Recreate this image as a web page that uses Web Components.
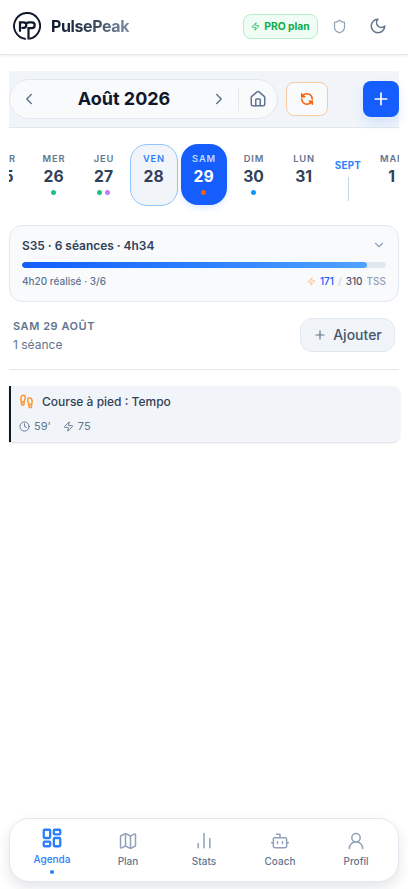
<!DOCTYPE html>
<html lang="fr">
<head>
<meta charset="utf-8">
<title>PulsePeak</title>
<style>
html,body{margin:0;height:100%;background:#fff}
body{font-family:Inter,"Liberation Sans",sans-serif;color:#314158;overflow:hidden}
</style>
</head>
<body>
<pulse-app></pulse-app>
<script>
const ICONS = {
  zap:'<path d="M4 14a1 1 0 0 1-.78-1.63l9.9-10.2a.5.5 0 0 1 .86.46l-1.92 6.02A1 1 0 0 0 13 10h7a1 1 0 0 1 .78 1.63l-9.9 10.2a.5.5 0 0 1-.86-.46l1.92-6.02A1 1 0 0 0 11 14z"/>',
  shield:'<path d="M20 13c0 5-3.5 7.5-7.66 8.95a1 1 0 0 1-.67-.01C7.5 20.5 4 18 4 13V6a1 1 0 0 1 1-1c2 0 4.500-1.200 6.240-2.720a1.170 1.170 0 0 1 1.520 0C14.510 3.810 17 5 19 5a1 1 0 0 1 1 1z"/>',
  moon:'<path d="M12 3a6 6 0 0 0 9 9 9 9 0 1 1-9-9Z"/>',
  left:'<path d="m15 18-6-6 6-6"/>',
  right:'<path d="m9 18 6-6-6-6"/>',
  down:'<path d="m6 9 6 6 6-6"/>',
  plus:'<path d="M5 12h14M12 5v14"/>',
  home:'<path d="M15 21v-8a1 1 0 0 0-1-1h-4a1 1 0 0 0-1 1v8"/><path d="M3 10a2 2 0 0 1 .709-1.528l7-5.999a2 2 0 0 1 2.582 0l7 5.999A2 2 0 0 1 21 10v9a2 2 0 0 1-2 2H5a2 2 0 0 1-2-2z"/>',
  sync:'<path d="M21 12a9 9 0 0 0-9-9 9.750 9.750 0 0 0-6.740 2.740L3 8"/><path d="M3 3v5h5"/><path d="M3 12a9 9 0 0 0 9 9 9.750 9.750 0 0 0 6.740-2.740L21 16"/><path d="M16 16h5v5"/>',
  clock:'<circle cx="12" cy="12" r="10"/><path d="M12 6v6l4 2"/>',
  steps:'<path d="M4 16v-2.380C4 11.500 2.970 10.500 3 8c.03-2.720 1.490-6 4.500-6C9.370 2 10 3.800 10 5.500c0 3.110-2 5.660-2 8.680V16a2 2 0 1 1-4 0Z"/><path d="M20 20v-2.380c0-2.120 1.030-3.120 1-5.620-.03-2.720-1.490-6-4.500-6C14.630 6 14 7.800 14 9.500c0 3.110 2 5.660 2 8.680V20a2 2 0 1 0 4 0Z"/><path d="M16 17h4M4 13h4"/>',
  grid:'<rect width="7" height="9" x="3" y="3" rx="1"/><rect width="7" height="5" x="14" y="3" rx="1"/><rect width="7" height="9" x="14" y="12" rx="1"/><rect width="7" height="5" x="3" y="16" rx="1"/>',
  map:'<path d="M14.106 5.553a2 2 0 0 0 1.788 0l3.659-1.830A1 1 0 0 1 21 4.619v12.764a1 1 0 0 1-.553.894l-4.553 2.277a2 2 0 0 1-1.788 0l-4.212-2.106a2 2 0 0 0-1.788 0l-3.659 1.830A1 1 0 0 1 3 19.381V6.618a1 1 0 0 1 .553-.894l4.553-2.277a2 2 0 0 1 1.788 0z"/><path d="M15 5.764v15M9 3.236v15"/>',
  stats:'<path d="M12 20V3M19 20V9M5 20v-5"/>',
  bot:'<path d="M12 8V4H8"/><rect width="16" height="12" x="4" y="8" rx="2"/><path d="M2 14h2M20 14h2M15 13v2M9 13v2"/>',
  user:'<circle cx="12" cy="8" r="5"/><path d="M20 21a8 8 0 0 0-16 0"/>'
};

class Base extends HTMLElement {
  constructor(){ super(); this.attachShadow({mode:'open'}); }
  connectedCallback(){ this.shadowRoot.innerHTML = '<style>*{box-sizing:border-box}:host{box-sizing:border-box}' + this.css() + '</style>' + this.html(); }
  at(n, d=''){ return this.getAttribute(n) ?? d; }
}

customElements.define('pp-icon', class extends Base {
  css(){ const s=this.at('size','16'); return `:host{display:block;flex:none;width:${s}px;height:${s}px}svg{display:block;width:100%;height:100%}`; }
  html(){ return `<svg viewBox="0 0 24 24" fill="none" stroke="currentColor" stroke-width="${this.at('weight','2')}" stroke-linecap="round" stroke-linejoin="round">${ICONS[this.at('name')]}</svg>`; }
});

customElements.define('pp-logo', class extends Base {
  css(){ return ':host{display:block;width:28px;height:28px}svg{display:block}'; }
  html(){ return `<svg width="28" height="28" viewBox="0 0 28 28" fill="none" stroke="#0f172b"><path d="M12.800 26.950A13 13 0 1 1 16.400 26.800" stroke-width="1.900"/><path d="M7 19.700V10.300h3.500a2.800 2.800 0 0 1 0 5.600H8.500" stroke-width="2.200"/><path d="M13 11.400c1-.8 2-1.100 3.500-1.100h2.300a2.900 2.900 0 0 1 0 5.800H15.500v11.400" stroke-width="2.200"/></svg>`; }
});

customElements.define('pp-header', class extends Base {
  css(){ return `:host{display:flex;align-items:center;height:55px;padding:0 21px 2px 13px;border-bottom:1px solid #e2e8f0;box-shadow:0 1px 3px #0f172b12;flex:none}
  .name{font-size:16px;font-weight:700;letter-spacing:-.4px;line-height:24px;margin-left:10px;background:linear-gradient(90deg,#0f172b 0%,#314158 50%,#7c8ca3 100%);-webkit-background-clip:text;background-clip:text;color:transparent}
  .pro{margin-left:auto;display:flex;align-items:center;justify-content:center;gap:4px;width:75px;height:25px;border:1px solid #b0efc7;border-radius:8px;background:#f0fdf4;color:#0fac4b;font-size:10.300px;font-weight:700;white-space:nowrap}
  .shield{color:#90a1b9;margin-left:14px}.moon{color:#62748e;margin-left:22px}`; }
  html(){ return `<pp-logo></pp-logo><span class="name">PulsePeak</span><div class="pro"><pp-icon name="zap" size="9"></pp-icon><span>PRO plan</span></div><pp-icon class="shield" name="shield" size="15"></pp-icon><pp-icon class="moon" name="moon" size="18"></pp-icon>`; }
});

customElements.define('pp-toolbar', class extends Base {
  css(){ return `:host{display:flex;align-items:center;height:57px;background:#f1f5f9;border-bottom:1px solid #e2e8f0}
  .month{display:flex;align-items:center;width:269px;height:40px;border:1px solid #e2e8f0;border-radius:20px;background:#f8fafc;color:#62748e;padding:0 10px}
  .month b{flex:1;text-align:center;color:#0f172b;font-size:18px;font-weight:700;line-height:24px}
  .sep{width:1px;height:24px;background:#e2e8f0;margin:0 10px}
  .sync{display:flex;align-items:center;justify-content:center;width:42px;height:34px;margin-left:8px;border:1px solid #f9cba2;border-radius:8px;background:#f8fafc;color:#f5600b}
  .add{display:flex;align-items:center;justify-content:center;width:36px;height:36px;margin-left:auto;border-radius:8px;background:#155dfc;color:#fff;box-shadow:0 6px 12px #2b7fff26}`; }
  html(){ return `<div class="month"><pp-icon name="left" size="18"></pp-icon><b>Août 2026</b><pp-icon name="right" size="18"></pp-icon><i class="sep"></i><pp-icon name="home" size="18"></pp-icon></div><div class="sync"><pp-icon name="sync" size="14" weight="2.8"></pp-icon></div><div class="add"><pp-icon name="plus" size="20"></pp-icon></div>`; }
});

customElements.define('pp-day', class extends Base {
  css(){ return `:host{display:flex;flex-direction:column;align-items:center;flex:none;width:48px;height:62px;padding-top:8px;border:1px solid transparent;border-radius:17px}
  .d{font-size:9.300px;font-weight:600;letter-spacing:.85px;line-height:12px;color:#62748e}
  .n{font-size:15.700px;font-weight:700;line-height:20px;margin-top:2px;margin-right:.8px;color:#314158}
  .dots{display:flex;gap:3px;margin:3px 1px 0 0}.dots i{width:5px;height:5px;border-radius:50%}
  :host([kind=today]){background:#f1f5f9;border-color:#8ec5ff}:host([kind=today]) .d{color:#2b7fff}
  :host([kind=active]){width:46px;height:61px;margin:0 1px;background:#155dfc;box-shadow:0 3px 6px #2b7fff26}:host([kind=active]) .d{color:#bedbff}:host([kind=active]) .n{color:#fff}`; }
  html(){ return `<span class="d">${this.at('label')}</span><span class="n">${this.at('num')}</span><div class="dots">${this.at('dots').split(' ').filter(Boolean).map(c=>`<i style="background:${c}"></i>`).join('')}</div>`; }
});

customElements.define('pp-month-mark', class extends Base {
  css(){ return `:host{display:flex;flex-direction:column;align-items:center;flex:none;width:36px;height:62px;padding-top:15px}
  span{font-size:9.800px;font-weight:700;letter-spacing:.25px;line-height:13px;color:#2b7fff}i{width:1px;height:24px;margin-top:5px;background:#cad5e2}`; }
  html(){ return `<span>${this.at('label')}</span><i></i>`; }
});

customElements.define('pp-days', class extends Base {
  css(){ return `:host{display:block;height:70px;margin-top:16px;overflow:hidden}
  .row{display:flex;gap:2px;margin-left:-29px}`; }
  html(){ return `<div class="row"><pp-day label="MAR" num="25"></pp-day><pp-day label="MER" num="26" dots="#1fc282"></pp-day><pp-day label="JEU" num="27" dots="#1fc282 #c27aff"></pp-day><pp-day label="VEN" num="28" kind="today"></pp-day><pp-day label="SAM" num="29" kind="active" dots="#ff5a0a"></pp-day><pp-day label="DIM" num="30" dots="#0c98ff"></pp-day><pp-day label="LUN" num="31"></pp-day><pp-month-mark label="SEPT"></pp-month-mark><pp-day label="MAR" num="1"></pp-day></div>`; }
});

customElements.define('pp-week', class extends Base {
  css(){ return `:host{display:flex;flex-direction:column;height:77px;margin-top:11px;padding:11px 12px 0;border:1px solid #e2e8f0;border-radius:13px;background:#f8fafc}
  .top,.bottom{display:flex;align-items:center;justify-content:space-between}
  .top{height:16px;font-size:11.950px;font-weight:600;color:#314158}
  .top pp-icon{color:#90a1b9}
  .bar{height:6px;margin-top:9px;border-radius:3px;background:#e2e8f0;overflow:hidden}.bar i{display:block;width:345px;height:6px;border-radius:3px;background:linear-gradient(90deg,#155dfc,#2b7fff 50%,#51a2ff)}
  .bottom{height:14px;margin-top:6px;font-size:10px;font-weight:500;color:#62748e}
  .tss{display:flex;align-items:center;gap:4px;color:#90a1b9}.tss pp-icon{color:#f8b566}.tss b{font-weight:500;color:#155dfc}.tss em{font-style:normal;color:#cad5e2}.tss u{text-decoration:none;color:#45556c}`; }
  html(){ return `<div class="top"><span>S35 · 6 séances · 4h34</span><pp-icon name="down" size="14"></pp-icon></div><div class="bar"><i></i></div><div class="bottom"><span>4h20 réalisé · 3/6</span><div class="tss"><pp-icon name="zap" size="9"></pp-icon><b>171</b><em>/</em><u>310</u><span>TSS</span></div></div>`; }
});

customElements.define('pp-day-head', class extends Base {
  css(){ return `:host{display:flex;justify-content:space-between;height:68px;padding:16px 4px 0;border-bottom:1px solid #e2e8f0}
  .t{font-size:11px;font-weight:600;letter-spacing:.55px;line-height:16px;color:#62748e}.s{font-size:12px;line-height:18px;margin-top:2px;color:#62748e}
  button{all:unset;box-sizing:border-box;display:flex;align-items:center;justify-content:center;gap:6px;width:95px;height:34px;border:1px solid #e2e8f0;border-radius:12px;background:#f1f5f9;font-size:14px;font-weight:500;color:#45556c}
  button span{line-height:18px;padding-bottom:1px}
  button pp-icon{color:#62748e}`; }
  html(){ return `<div><div class="t">SAM 29 AOÛT</div><div class="s">1 séance</div></div><button><pp-icon name="plus" size="14"></pp-icon><span>Ajouter</span></button>`; }
});

customElements.define('pp-session', class extends Base {
  css(){ return `:host{display:flex;flex-direction:column;width:391px;height:56px;margin-top:16px;padding:7px 8px 0;border-left:2px solid #0f172b;border-radius:0 8px 8px 0;background:#f1f5f9;box-shadow:0 1px 2px #0f172b24}
  .top{display:flex;align-items:center;gap:8px;height:17px;font-size:12px;font-weight:500;color:#314158}.top pp-icon{color:#fb9a36}
  .meta{display:flex;align-items:center;gap:4px;height:16px;margin-top:8px;font-size:11px;color:#62748e}.second{margin-left:8px}`; }
  html(){ return `<div class="top"><pp-icon name="steps" size="15" weight="2.5"></pp-icon><slot></slot></div><div class="meta"><pp-icon name="clock" size="11"></pp-icon><span>${this.at('time')}</span><pp-icon class="second" name="zap" size="11"></pp-icon><span>${this.at('load')}</span></div>`; }
});

customElements.define('pp-tab', class extends Base {
  css(){ return `:host{display:flex;flex:1;flex-direction:column;align-items:center;padding-top:12px;font-size:10px;font-weight:500;line-height:13px;color:#62748e}
  pp-icon{color:#90a1b9}span{margin-top:4px}
  :host([active]){padding-top:8px;color:#2b7fff}:host([active]) pp-icon{color:#2b7fff}i{width:4px;height:4px;margin-top:4px;border-radius:50%;background:#2b7fff}`; }
  html(){ const a=this.hasAttribute('active'); return `<pp-icon name="${this.at('icon')}" size="${a?22:20}" weight="${a?2.5:1.8}"></pp-icon><span><slot></slot></span>${a?'<i></i>':''}`; }
});

customElements.define('pp-nav', class extends Base {
  css(){ return `:host{display:flex;flex:none;height:64px;margin:auto 9px 7px;padding:0 4px;border:1px solid #e2e8f0;border-radius:20px;background:#fff;box-shadow:0 6px 14px #0f172b1c}`; }
  html(){ return `<pp-tab icon="grid" active>Agenda</pp-tab><pp-tab icon="map">Plan</pp-tab><pp-tab icon="stats">Stats</pp-tab><pp-tab icon="bot">Coach</pp-tab><pp-tab icon="user">Profil</pp-tab>`; }
});

customElements.define('pulse-app', class extends Base {
  css(){ return `:host{display:flex;flex-direction:column;height:889px}main{padding:16px 9px 0}`; }
  html(){ return `<pp-header></pp-header><main><pp-toolbar></pp-toolbar><pp-days></pp-days><pp-week></pp-week><pp-day-head></pp-day-head><pp-session time="59'" load="75">Course à pied : Tempo</pp-session></main><pp-nav></pp-nav>`; }
});
</script>
</body>
</html>
